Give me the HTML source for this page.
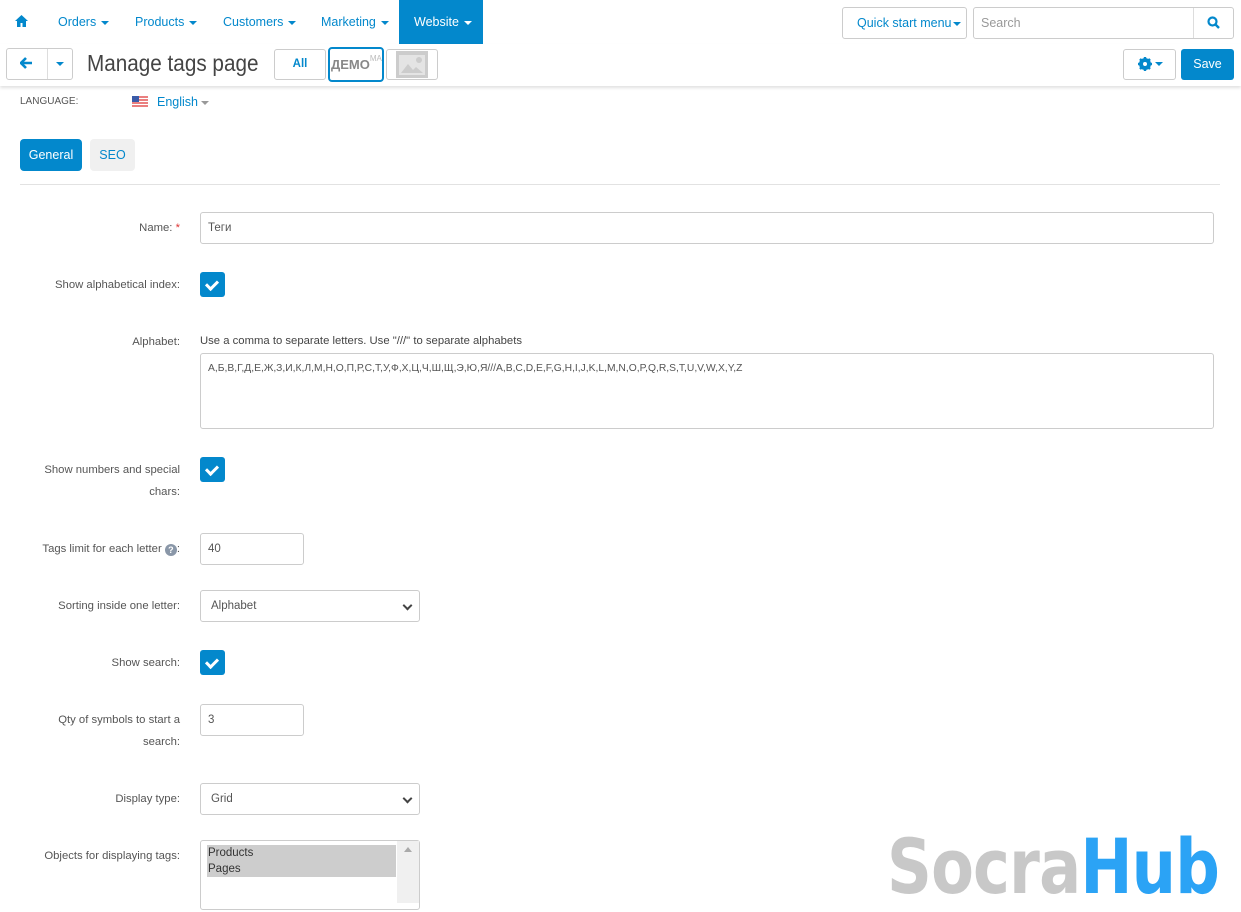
<!DOCTYPE html>
<html><head><meta charset="utf-8"><style>
*{box-sizing:border-box;margin:0;padding:0}
body{width:1241px;height:902px;overflow:hidden;background:#fff;font-family:"Liberation Sans","Noto Sans CJK SC",sans-serif;font-size:12px;color:#555;position:relative}
.a{position:absolute}
.nav{color:#0388cc;font-size:12.5px;top:15px}
.car{display:inline-block;width:0;height:0;border-left:4px solid transparent;border-right:4px solid transparent;border-top:4px solid currentColor;vertical-align:middle;margin-left:5px}
.lbl{right:1061px;text-align:right;color:#555;font-size:11.3px;line-height:22px}
.inp{border:1px solid #ccc;border-radius:3px;background:#fff;font-size:11.5px;color:#555;padding-left:7px}
.cb{width:25px;height:25px;background:#0388cc;border-radius:3px;left:200px}
.cb:after{content:"";position:absolute;left:8px;top:6px;width:5px;height:9px;border:solid #fff;border-width:0 3px 3px 0;transform:rotate(45deg)}
.sel:after{content:"";position:absolute;right:8px;top:11px;width:5px;height:5px;border:solid #444;border-width:0 2px 2px 0;transform:rotate(45deg)}
</style></head><body>
<div class="a" style="left:0;top:0;width:1241px;height:44px;background:#fff"></div>
<svg class="a" style="left:15px;top:15px" width="13" height="12" viewBox="0 0 13 12"><path d="M6.5 0L0 6h2v6h3.5V8h2v4H11V6h2z" fill="#0388cc"/></svg>
<div class="a nav" style="left:58px">Orders<span class="car"></span></div>
<div class="a nav" style="left:135px">Products<span class="car"></span></div>
<div class="a nav" style="left:223px">Customers<span class="car"></span></div>
<div class="a nav" style="left:321px">Marketing<span class="car"></span></div>
<div class="a" style="left:399px;top:0;width:84px;height:44px;background:#0388cc"></div>
<div class="a nav" style="left:414px;color:#fff">Website<span class="car"></span></div>
<div class="a inp" style="left:842px;top:7px;width:125px;height:32px;color:#0388cc;font-size:12.5px;line-height:30px;padding-left:14px">Quick start menu<span class="car" style="margin-left:2px"></span></div>
<div class="a inp" style="left:973px;top:7px;width:261px;height:32px;color:#999;line-height:30px;font-size:12.5px">Search</div>
<div class="a" style="left:1193px;top:8px;width:1px;height:30px;background:#ddd"></div>
<svg class="a" style="left:1207px;top:16px" width="13" height="13" viewBox="0 0 13 13"><circle cx="5.5" cy="5.5" r="4" stroke="#0388cc" stroke-width="2.2" fill="none"/><path d="M8.5 8.5L12 12" stroke="#0388cc" stroke-width="2.4"/></svg>
<div class="a" style="left:0;top:44px;width:1241px;height:42px;background:#fff;box-shadow:0 2px 3px rgba(0,0,0,.12)"></div>
<div class="a inp" style="left:6px;top:48px;width:67px;height:32px;padding:0"></div>
<div class="a" style="left:47px;top:49px;width:1px;height:30px;background:#ddd"></div>
<svg class="a" style="left:20px;top:57px" width="13" height="12" viewBox="0 0 13 12"><path d="M6 1L1 6l5 5M1.5 6H12" stroke="#0388cc" stroke-width="2.6" fill="none"/></svg>
<span class="a car" style="left:51px;top:62px;color:#0388cc"></span>
<div class="a" style="left:87px;top:50px;font-size:23px;color:#444;transform:scaleX(0.9);transform-origin:left;white-space:nowrap">Manage tags page</div>
<div class="a inp" style="left:274px;top:49px;width:52px;height:31px;color:#0388cc;font-weight:bold;text-align:center;line-height:29px;padding:0">All</div>
<div class="a" style="left:328px;top:47px;width:56px;height:35px;border:2px solid #0388cc;border-radius:4px;font-weight:bold;color:#888;font-size:13px;line-height:31px;padding-left:1px;overflow:hidden">ДЕМО<span style="font-size:8px;font-weight:normal;color:#bbb;vertical-align:top;line-height:20px">MA</span></div>
<div class="a inp" style="left:386px;top:49px;width:52px;height:31px;padding:0"></div>
<div class="a" style="left:396px;top:51px;width:32px;height:27px;background:#ccc"></div>
<svg class="a" style="left:399px;top:55px" width="26" height="20" viewBox="0 0 26 20"><rect x="0" y="0" width="26" height="20" fill="#e4e4e4"/><path d="M2 18l7-9 5 6 3-3 7 6z" fill="#ccc"/><circle cx="20" cy="5" r="3" fill="#ccc"/></svg>
<div class="a inp" style="left:1123px;top:49px;width:53px;height:31px;padding:0"></div>
<svg class="a" style="left:1138px;top:57px" width="14" height="14" viewBox="0 0 14 14"><circle cx="7" cy="7" r="4.5" fill="none" stroke="#0388cc" stroke-width="3"/><path d="M7 0v14M0 7h14M2 2l10 10M12 2L2 12" stroke="#0388cc" stroke-width="2.4"/><circle cx="7" cy="7" r="2" fill="#fff"/></svg>
<span class="a car" style="left:1150px;top:62px;color:#0388cc"></span>
<div class="a" style="left:1181px;top:49px;width:53px;height:31px;background:#0388cc;border-radius:3px;color:#fff;text-align:center;line-height:31px;font-size:12.5px">Save</div>
<div class="a" style="left:20px;top:96px;font-size:10px;color:#555">LANGUAGE:</div>
<svg class="a" style="left:132px;top:96px" width="16" height="11" viewBox="0 0 16 11"><rect width="16" height="11" fill="#fff"/><path d="M0 1h16M0 4h16M0 7h16M0 10h16" stroke="#d33" stroke-width="1.2"/><rect width="7" height="6" fill="#3b5ba8"/></svg>
<div class="a" style="left:157px;top:95px;color:#0388cc;font-size:12.5px">English<span class="car" style="color:#999;margin-left:3px"></span></div>
<div class="a" style="left:20px;top:139px;width:62px;height:32px;background:#0388cc;border-radius:4px;color:#fff;text-align:center;line-height:32px;font-size:12.5px">General</div>
<div class="a" style="left:90px;top:139px;width:45px;height:32px;background:#f0f0f0;border-radius:4px;color:#0388cc;text-align:center;line-height:32px;font-size:12.5px">SEO</div>
<div class="a" style="left:20px;top:184px;width:1200px;height:1px;background:#e2e2e2"></div>
<div class="a lbl" style="top:217px">Name: <span style="color:#d33">*</span></div>
<div class="a inp" style="left:200px;top:212px;width:1014px;height:32px;line-height:30px">Теги</div>
<div class="a lbl" style="top:274px">Show alphabetical index:</div>
<div class="a cb" style="top:272px"></div>
<div class="a lbl" style="top:331px">Alphabet:</div>
<div class="a" style="left:200px;top:335px;font-size:11.3px;color:#444">Use a comma to separate letters. Use "///" to separate alphabets</div>
<div class="a inp" style="left:200px;top:353px;width:1014px;height:76px;padding-top:9px;font-size:10.3px">А,Б,В,Г,Д,Е,Ж,З,И,К,Л,М,Н,О,П,Р,С,Т,У,Ф,Х,Ц,Ч,Ш,Щ,Э,Ю,Я///A,B,C,D,E,F,G,H,I,J,K,L,M,N,O,P,Q,R,S,T,U,V,W,X,Y,Z</div>
<div class="a lbl" style="top:459px">Show numbers and special<br>chars:</div>
<div class="a cb" style="top:457px"></div>
<div class="a lbl" style="top:538px">Tags limit for each letter <span style="display:inline-block;width:12px;height:12px;border-radius:6px;background:#8a97a8;color:#fff;font-size:9px;line-height:12px;text-align:center;font-weight:bold;vertical-align:-1px">?</span>:</div>
<div class="a inp" style="left:200px;top:533px;width:104px;height:32px;line-height:30px">40</div>
<div class="a lbl" style="top:595px">Sorting inside one letter:</div>
<div class="a inp sel" style="left:200px;top:590px;width:220px;height:32px;line-height:30px;padding-left:10px">Alphabet</div>
<div class="a lbl" style="top:652px">Show search:</div>
<div class="a cb" style="top:650px"></div>
<div class="a lbl" style="top:709px">Qty of symbols to start a<br>search:</div>
<div class="a inp" style="left:200px;top:704px;width:104px;height:32px;line-height:30px">3</div>
<div class="a lbl" style="top:788px">Display type:</div>
<div class="a inp sel" style="left:200px;top:783px;width:220px;height:32px;line-height:30px;padding-left:10px">Grid</div>
<div class="a lbl" style="top:845px">Objects for displaying tags:</div>
<div class="a inp" style="left:200px;top:840px;width:220px;height:70px;padding:0"></div>
<div class="a" style="left:207px;top:845px;width:189px;height:32px;background:#cdcdcd;color:#333;font-size:11.5px;line-height:16px;padding-left:1px">Products<br>Pages</div>
<div class="a" style="left:397px;top:841px;width:22px;height:62px;background:#f0f0f0"></div>
<div class="a" style="left:404px;top:847px;width:0;height:0;border-left:4px solid transparent;border-right:4px solid transparent;border-bottom:5px solid #aaa"></div>
<div class="a" style="left:887px;top:822px;font-size:76px;font-weight:bold;letter-spacing:-1px;line-height:90px;color:#c8c8c8;font-family:'DejaVu Sans','Liberation Sans',sans-serif;transform:scaleX(0.82);transform-origin:left;white-space:nowrap">Socra<span style="color:#2ba3f5">Hub</span></div>
</body></html>
